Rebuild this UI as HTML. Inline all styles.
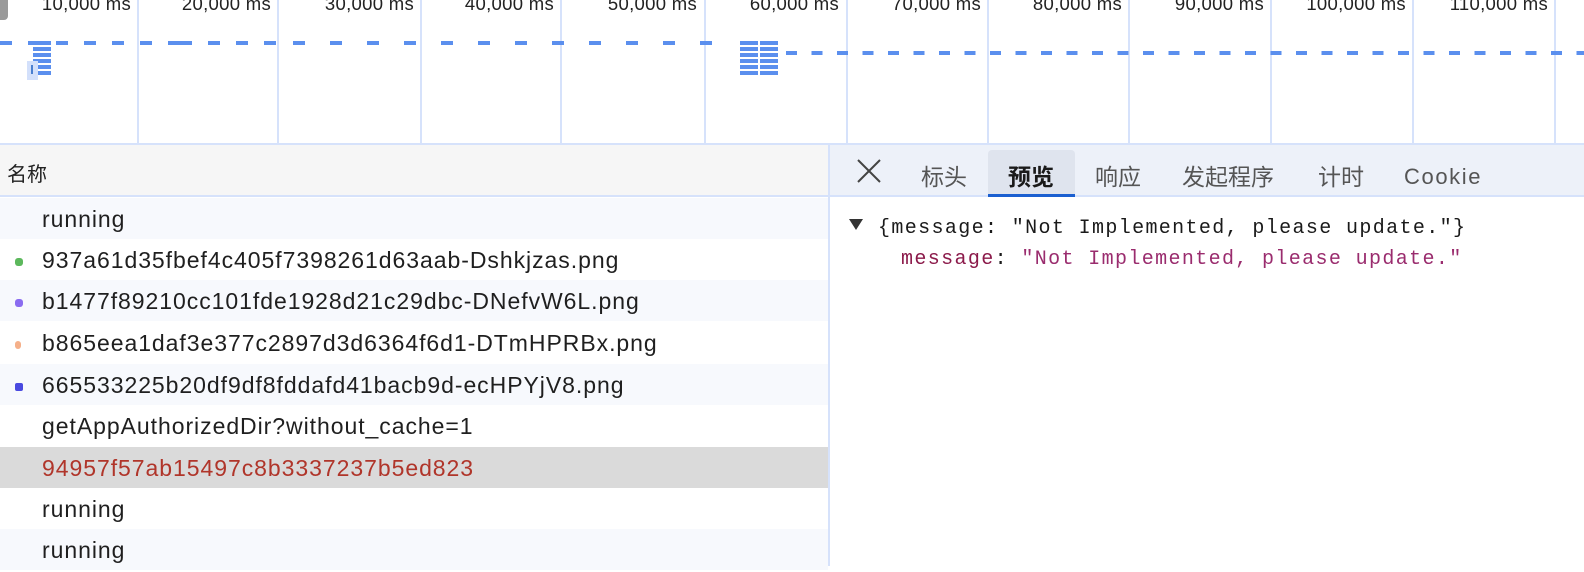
<!DOCTYPE html>
<html><head><meta charset="utf-8"><style>
*{margin:0;padding:0;box-sizing:border-box}
body{width:1584px;height:566px;overflow:hidden;background:#fff;font-family:"Liberation Sans","Noto Sans CJK SC",sans-serif;position:relative}
.abs{position:absolute}
.vl{position:absolute;top:0;height:143px;width:2px;background:#d6e2fb}
.lbl{position:absolute;top:-7px;font-size:18.5px;letter-spacing:0.3px;color:#222;text-align:right;width:130px}
.bar{position:absolute;height:4px;background:#5b8fee}
.row{position:absolute;left:0;width:828px;height:41px;font-size:23px;letter-spacing:0.95px;color:#1f1f1f;line-height:43px;padding-left:42px;white-space:nowrap}
.alt{background:#f7f9fd}
.tab{position:absolute;top:164px;font-size:23px;line-height:26px;color:#555}
.dot{position:absolute;left:15px;width:8px;height:8px;border-radius:3px;top:19px}
.mono{font-family:'Liberation Mono',monospace;font-size:20px;letter-spacing:1.37px;white-space:pre}
</style></head><body>
<div class="abs" style="left:0;top:0;width:8px;height:20px;background:#9a9a9a;border-radius:0 0 4px 0"></div>
<div class="vl" style="left:137px"></div><div class="vl" style="left:277px"></div><div class="vl" style="left:420px"></div><div class="vl" style="left:560px"></div><div class="vl" style="left:704px"></div><div class="vl" style="left:846px"></div><div class="vl" style="left:987px"></div><div class="vl" style="left:1128px"></div><div class="vl" style="left:1270px"></div><div class="vl" style="left:1412px"></div><div class="vl" style="left:1554px"></div>
<div class="lbl" style="left:1px">10,000 ms</div><div class="lbl" style="left:141px">20,000 ms</div><div class="lbl" style="left:284px">30,000 ms</div><div class="lbl" style="left:424px">40,000 ms</div><div class="lbl" style="left:567px">50,000 ms</div><div class="lbl" style="left:709px">60,000 ms</div><div class="lbl" style="left:851px">70,000 ms</div><div class="lbl" style="left:992px">80,000 ms</div><div class="lbl" style="left:1134px">90,000 ms</div><div class="lbl" style="left:1276px">100,000 ms</div><div class="lbl" style="left:1418px">110,000 ms</div>
<div class="abs" style="left:0;top:41px;width:180px;height:4px;background:repeating-linear-gradient(90deg,#5b8fee 0 12px,transparent 12px 28px)"></div>
<div class="abs" style="left:180px;top:41px;width:100px;height:4px;background:repeating-linear-gradient(90deg,#5b8fee 0 12px,transparent 12px 28px)"></div>
<div class="abs" style="left:293px;top:41px;width:430px;height:4px;background:repeating-linear-gradient(90deg,#5b8fee 0 12px,transparent 12px 37px)"></div>
<div class="abs" style="left:786px;top:51px;width:798px;height:4px;background:repeating-linear-gradient(90deg,#5b8fee 0 11px,transparent 11px 25.5px)"></div>
<div class="bar" style="left:33px;top:41px;width:18px"></div><div class="bar" style="left:33px;top:47px;width:18px"></div><div class="bar" style="left:33px;top:53px;width:18px"></div><div class="bar" style="left:33px;top:59px;width:18px"></div><div class="bar" style="left:33px;top:65px;width:18px"></div><div class="bar" style="left:33px;top:71px;width:18px"></div>
<div class="abs" style="left:27px;top:61px;width:11px;height:19px;background:#d3e0fb"></div><div class="abs" style="left:31px;top:65px;width:2px;height:9px;background:#4a7fd0"></div>
<div class="bar" style="left:740px;top:41px;width:38px;height:34px;background:repeating-linear-gradient(180deg,#5b8fee 0 4px,#fff 4px 6px)"></div>
<div class="abs" style="left:758px;top:41px;width:2px;height:34px;background:#fff"></div>
<div class="abs" style="left:0;top:143px;width:1584px;height:2px;background:#d6e2fb"></div>
<div class="abs" style="left:0;top:145px;width:828px;height:52px;background:#f6f6f6;border-bottom:2px solid #d6e2fb"></div>
<div class="abs" style="left:7px;top:158px;font-size:20px;color:#222">名称</div>
<div class="row alt" style="top:198px">running</div>
<div class="row" style="top:239px"><span class="dot" style="background:#5cb85c"></span>937a61d35fbef4c405f7398261d63aab-Dshkjzas.png</div>
<div class="row alt" style="top:280px"><span class="dot" style="background:#8a6cf0"></span>b1477f89210cc101fde1928d21c29dbc-DNefvW6L.png</div>
<div class="row" style="top:322px"><span class="dot" style="background:#f5b08a;width:6px"></span>b865eea1daf3e377c2897d3d6364f6d1-DTmHPRBx.png</div>
<div class="row alt" style="top:364px"><span class="dot" style="background:#4a4ae0;border-radius:2px"></span>665533225b20df9df8fddafd41bacb9d-ecHPYjV8.png</div>
<div class="row" style="top:405px">getAppAuthorizedDir?without_cache=1</div>
<div class="row" style="top:447px;background:#dadada;color:#b0352a">94957f57ab15497c8b3337237b5ed823</div>
<div class="row" style="top:488px">running</div>
<div class="row alt" style="top:529px">running</div>
<div class="abs" style="left:828px;top:145px;width:2px;height:421px;background:#d6e2fb"></div>
<div class="abs" style="left:830px;top:145px;width:754px;height:52px;background:#edf1f9;border-bottom:2px solid #d6e2fb"></div>
<svg class="abs" style="left:856px;top:158px" width="26" height="26"><path d="M2 2L24 24M24 2L2 24" stroke="#444" stroke-width="2"/></svg>
<div class="abs" style="left:988px;top:150px;width:87px;height:47px;background:#dfe4ee;border-radius:4px 4px 0 0;border-bottom:3px solid #1b5fd0"></div>
<div class="tab" style="left:921px">标头</div>
<div class="tab" style="left:1008px;color:#1a1a1a;font-weight:bold">预览</div>
<div class="tab" style="left:1095px">响应</div>
<div class="tab" style="left:1182px">发起程序</div>
<div class="tab" style="left:1318px">计时</div>
<div class="tab" style="left:1404px;letter-spacing:1.6px;font-size:22px">Cookie</div>
<svg class="abs" style="left:849px;top:219px" width="14" height="12"><path d="M0 0H14L7 11Z" fill="#333"/></svg>
<div class="abs mono" style="left:878px;top:217px;color:#1a1a1a">{message: "Not Implemented, please update."}</div>
<div class="abs mono" style="left:901px;top:248px;color:#1a1a1a"><span style="color:#8b1a4a">message</span>: <span style="color:#9a2c6e">"Not Implemented, please update."</span></div>
</body></html>
